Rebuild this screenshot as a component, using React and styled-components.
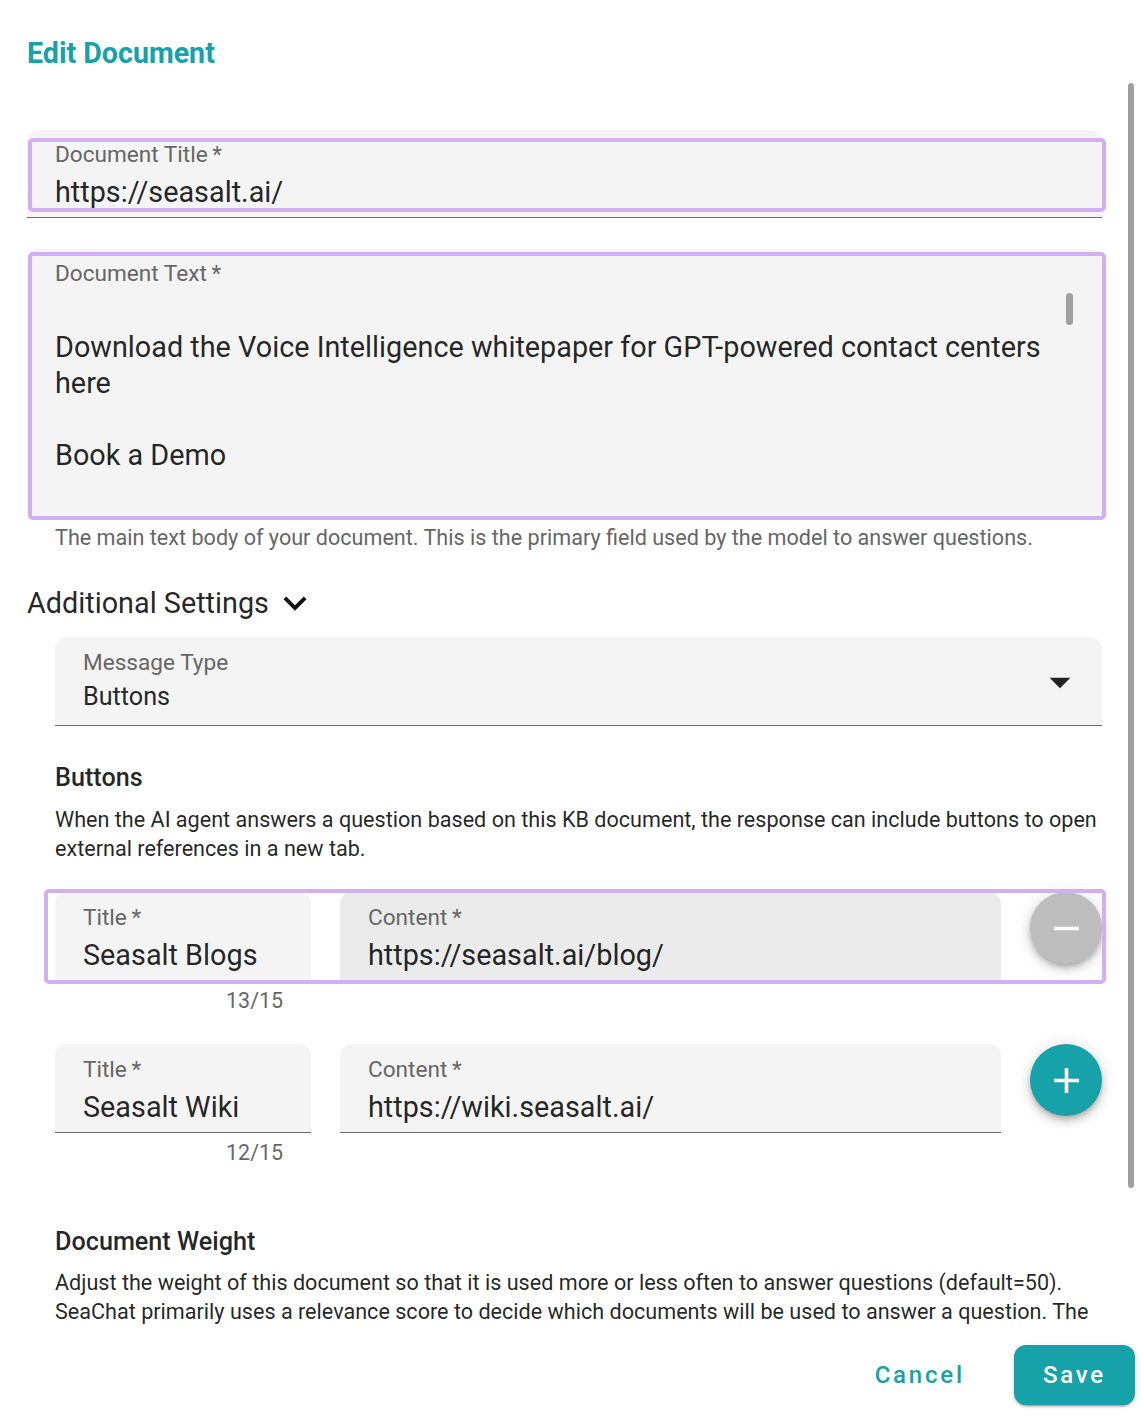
import React from 'react'
import styled, { createGlobalStyle } from 'styled-components'

const teal = '#17a1a8'
const outline = '#d4aef0'

const GlobalStyle = createGlobalStyle`
  html, body {
    margin: 0;
    padding: 0;
    background: #fff;
    font-family: Roboto, 'Liberation Sans', sans-serif;
  }
  * { box-sizing: border-box; }
`

const Dialog = styled.div`
  width: 1144px;
  height: 1420px;
  position: relative;
  display: flex;
  flex-direction: column;
  background: #fff;
  overflow: hidden;
`

const Header = styled.h2`
  margin: 0;
  height: 80px;
  padding: 37px 27px 0;
  font-size: 28.6px;
  line-height: 32px;
  font-weight: 700;
  color: ${teal};
`

const Body = styled.div`
  height: 1248px;
  overflow: hidden;
  padding: 50px 42px 0 27px;
  display: flex;
  flex-direction: column;
`

const Scrollbar = styled.div`
  position: absolute;
  left: 1128px;
  top: 83px;
  width: 6px;
  height: 1105px;
  border-radius: 3px;
  background: #a0a0a0;
`

const Filled = styled.div`
  position: relative;
  background: ${p => (p.$hover ? '#ebebeb' : '#f4f4f4')};
  border-radius: 12px 12px 0 0;
  border-bottom: 1px solid ${p => (p.$noLine ? 'transparent' : '#6b6b6b')};
  height: ${p => p.$h}px;
  padding: ${p => p.$pt}px ${p => p.$pr || 28}px 0 28px;
  flex-shrink: 0;
`

const Highlight = styled.div`
  position: absolute;
  top: ${p => p.$t}px;
  left: ${p => p.$l}px;
  right: ${p => p.$r}px;
  bottom: ${p => p.$b}px;
  border: 4px solid ${outline};
  border-radius: 5px;
  pointer-events: none;
  z-index: 2;
`

const Label = styled.div`
  font-size: 22.6px;
  line-height: 24px;
  color: #666;
  white-space: nowrap;
`

const Value = styled.div`
  margin-top: ${p => p.$mt}px;
  font-size: ${p => p.$size || 28.8}px;
  line-height: ${p => (p.$size ? 30 : 32)}px;
  color: rgba(0, 0, 0, 0.87);
  white-space: nowrap;
`

const TextArea = styled.div`
  margin-top: 7px;
  height: 216px;
  overflow: hidden;
  font-size: 28.8px;
  line-height: 36px;
  color: rgba(0, 0, 0, 0.87);
  padding-right: 20px;
`

const Line = styled.div`
  height: 36px;
  white-space: nowrap;
`

const InnerThumb = styled.div`
  position: absolute;
  right: 29px;
  top: 44px;
  width: 7px;
  height: 32px;
  border-radius: 4px;
  background: #a0a0a0;
`

const Helper = styled.div`
  margin-top: 6px;
  padding-left: 28px;
  font-size: 21.6px;
  line-height: 24px;
  color: #666;
  white-space: nowrap;
`

const SectionToggle = styled.div`
  margin-top: 36px;
  display: flex;
  align-items: center;
  height: 34px;
  font-size: 28.8px;
  color: rgba(0, 0, 0, 0.87);
  svg { margin-left: 3px; }
`

const Indented = styled.div`
  margin-left: 28px;
  display: flex;
  flex-direction: column;
`

const SelectBox = styled(Filled)`
  margin-top: 17px;
  display: flex;
  align-items: flex-start;
  justify-content: space-between;
  padding-right: 17px;
  svg { margin-top: 6px; }
`

const Heading = styled.div`
  margin-top: ${p => p.$mt}px;
  font-size: 25.2px;
  line-height: 30px;
  font-weight: 500;
  color: rgba(0, 0, 0, 0.87);
`

const Paragraph = styled.p`
  margin: ${p => p.$mt}px 0 0;
  font-size: 21.6px;
  line-height: 29px;
  color: rgba(0, 0, 0, 0.87);
`

const ButtonRows = styled.div`
  margin-top: 29px;
  display: flex;
  flex-direction: column;
  gap: 31px;
`

const ButtonRow = styled.div`
  display: flex;
  flex-direction: column;
`

const FieldsLine = styled.div`
  position: relative;
  display: flex;
  gap: 29px;
  align-items: flex-start;
`

const Counter = styled.div`
  width: 256px;
  margin-top: 8px;
  padding-right: 28px;
  text-align: right;
  font-size: 21.4px;
  line-height: 24px;
  color: #666;
`

const Fab = styled.button`
  width: 72px;
  height: 72px;
  border-radius: 50%;
  border: none;
  padding: 0;
  display: flex;
  align-items: center;
  justify-content: center;
  background: ${p => (p.$disabled ? '#bdbdbd' : teal)};
  box-shadow: 0 3px 5px -1px rgba(0, 0, 0, 0.2), 0 6px 10px 0 rgba(0, 0, 0, 0.14),
    0 1px 18px 0 rgba(0, 0, 0, 0.12);
  flex-shrink: 0;
`

const Footer = styled.div`
  flex: 1;
  display: flex;
  justify-content: flex-end;
  align-items: flex-start;
  padding: 17px 9px 0 0;
  gap: 33px;
`

const ActionButton = styled.button`
  height: 60px;
  padding: 0 ${p => (p.$primary ? 29 : 16)}px;
  border: none;
  border-radius: 12px;
  font-family: Roboto, 'Liberation Sans', sans-serif;
  font-size: 24px;
  font-weight: 500;
  letter-spacing: 2.8px;
  color: ${p => (p.$primary ? '#fff' : teal)};
  background: ${p => (p.$primary ? teal : 'transparent')};
  box-shadow: ${p =>
    p.$primary
      ? '0 3px 1px -2px rgba(0,0,0,0.2), 0 2px 2px 0 rgba(0,0,0,0.14), 0 1px 5px 0 rgba(0,0,0,0.12)'
      : 'none'};
`

const ExpandIcon = () => (
  <svg width="46" height="46" viewBox="0 0 24 24" fill="#111">
    <path d="M16.59 8.59 12 13.17 7.41 8.59 6 10l6 6 6-6z" />
  </svg>
)

const DropIcon = () => (
  <svg width="50" height="50" viewBox="0 0 24 24" fill="#222">
    <path d="M7 10l5 5 5-5z" />
  </svg>
)

const MinusIcon = () => (
  <svg width="43" height="43" viewBox="0 0 24 24" fill="#fff">
    <path d="M19 13H5v-2h14v2z" />
  </svg>
)

const PlusIcon = () => (
  <svg width="43" height="43" viewBox="0 0 24 24" fill="#fff">
    <path d="M19 13h-6v6h-2v-6H5v-2h6V5h2v6h6v2z" />
  </svg>
)

const buttons = [
  { title: 'Seasalt Blogs', content: 'https://seasalt.ai/blog/', active: true },
  { title: 'Seasalt Wiki', content: 'https://wiki.seasalt.ai/', active: false }
]

const req = '\u2009*'

export default function App () {
  return (
    <Dialog>
      <GlobalStyle />
      <Header>Edit Document</Header>
      <Body>
        <Filled $h={88} $pt={13}>
          <Highlight $t={8} $l={1} $r={-4} $b={5} />
          <Label>Document Title{req}</Label>
          <Value $mt={9}>https://seasalt.ai/</Value>
        </Filled>

        <Filled $h={271} $pt={13} $noLine style={{ marginTop: 31 }}>
          <Highlight $t={3} $l={1} $r={-4} $b={-1} />
          <Label>Document Text{req}</Label>
          <TextArea>
            <Line />
            <Line>Download the Voice Intelligence whitepaper for GPT-powered contact centers</Line>
            <Line>here</Line>
            <Line />
            <Line>Book a Demo</Line>
            <Line />
          </TextArea>
          <InnerThumb />
        </Filled>
        <Helper>
          The main text body of your document. This is the primary field used by the model to answer questions.
        </Helper>

        <SectionToggle>
          Additional Settings
          <ExpandIcon />
        </SectionToggle>

        <Indented>
          <SelectBox $h={89} $pt={14}>
            <div>
              <Label>Message Type</Label>
              <Value $mt={7} $size={25.2}>Buttons</Value>
            </div>
            <DropIcon />
          </SelectBox>

          <Heading $mt={37}>Buttons</Heading>
          <Paragraph $mt={12}>
            When the AI agent answers a question based on this KB document, the response can include buttons to open
            external references in a new tab.
          </Paragraph>

          <ButtonRows>
            {buttons.map(b => (
              <ButtonRow key={b.title}>
                <FieldsLine>
                  {b.active && <Highlight $t={-3} $l={-11} $r={-4} $b={-3} />}
                  <Filled $h={89} $pt={14} style={{ width: 256 }}>
                    <Label>Title{req}</Label>
                    <Value $mt={9}>{b.title}</Value>
                  </Filled>
                  <Filled $h={89} $pt={14} $hover={b.active} style={{ width: 661 }}>
                    <Label>Content{req}</Label>
                    <Value $mt={9}>{b.content}</Value>
                  </Filled>
                  <Fab $disabled={b.active}>
                    {b.active ? <MinusIcon /> : <PlusIcon />}
                  </Fab>
                </FieldsLine>
                <Counter>{b.title.length}/15</Counter>
              </ButtonRow>
            ))}
          </ButtonRows>

          <Heading $mt={62}>Document Weight</Heading>
          <Paragraph $mt={11}>
            Adjust the weight of this document so that it is used more or less often to answer questions (default=50).
            SeaChat primarily uses a relevance score to decide which documents will be used to answer a question. The
          </Paragraph>
        </Indented>
      </Body>
      <Footer>
        <ActionButton>Cancel</ActionButton>
        <ActionButton $primary>Save</ActionButton>
      </Footer>
      <Scrollbar />
    </Dialog>
  )
}
